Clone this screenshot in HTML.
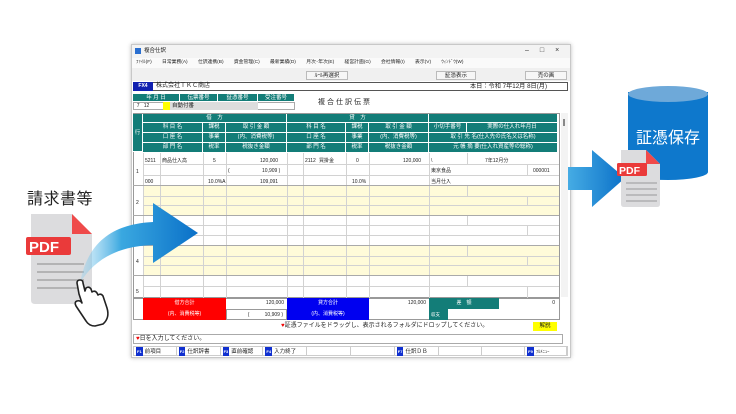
<!DOCTYPE html>
<html><head><meta charset="utf-8"><style>
*{margin:0;padding:0;box-sizing:border-box}
body{width:736px;height:414px;background:#fff;position:relative;overflow:hidden;font-family:"Liberation Sans","Noto Sans CJK JP",sans-serif;font-size:6px;color:#222}
.a{position:absolute}
.t{background:#137d78;color:#fff;text-align:center;border-right:1px solid #fff;border-bottom:1px solid #fff;line-height:8px;font-size:5.5px;white-space:nowrap;overflow:hidden}
.c{border-right:1px solid #c8c8c8;border-bottom:1px solid #d0d0d0;font-size:5px;line-height:8px;white-space:nowrap;overflow:hidden;padding:0 2px}
.y{background:#fffbd9}
.btn{border:1px solid #bbb;background:#f6f6f6;height:9px;font-size:5.5px;line-height:8px;text-align:center}
.fk{font-size:5.5px;line-height:9px;border-right:1px solid #ccc;padding-left:2px}
.fk b{display:inline-block;background:#1030d0;color:#fff;font-size:4px;padding:0 1px;margin-right:2px}
</style></head><body>

<!-- window -->
<div class="a" style="left:131px;top:44px;width:440px;height:314px;background:#fff;border:1px solid #c8c8c8;box-shadow:0 0 4px rgba(0,0,0,.25)"></div>
<div class="a" style="left:132px;top:45px;width:438px;height:13px;background:#f3f3f3"></div>
<div class="a" style="left:135px;top:48px;width:6px;height:6px;background:#2a6fd0"></div>
<div class="a" style="left:144px;top:47px;font-size:5.5px;line-height:8px">複合仕訳</div>
<div class="a" style="left:525px;top:46px;font-size:7px;line-height:9px;color:#333;letter-spacing:11px">–□×</div>
<div class="a" style="left:132px;top:58px;width:438px;height:10px;background:#fafafa;font-size:4.8px;line-height:10px;word-spacing:9px;padding-left:4px;white-space:nowrap">ﾌｧｲﾙ(F) 日常業務(A) 仕訳連携(B) 資金管理(C) 最新業績(D) 月次･年次(E) 経営計画(G) 会社情報(I) 表示(V) ｳｨﾝﾄﾞｳ(W)</div>
<div class="a" style="left:132px;top:68px;width:438px;height:13px;background:#f0f0f0"></div>
<div class="a btn" style="left:306px;top:71px;width:42px">ﾙｰﾙ再選択</div>
<div class="a btn" style="left:436px;top:71px;width:40px">証憑表示</div>
<div class="a btn" style="left:525px;top:71px;width:42px">売の画</div>
<div class="a" style="left:133px;top:82px;width:435px;height:9px;border:1px solid #555"></div>
<div class="a" style="left:133px;top:82px;width:20px;height:9px;background:#1020b0;color:#fff;font-size:5px;font-weight:bold;line-height:9px;text-align:center">FX4</div>
<div class="a" style="left:156px;top:82px;font-size:6px;line-height:9px">株式会社ＴＫＣ商店</div>
<div class="a" style="left:470px;top:82px;font-size:6.2px;line-height:9px">本日：令和 7年12月 8日(月)</div>
<!-- date row -->
<div class="a t" style="left:133px;top:94px;width:47px;height:8px">年 月 日</div>
<div class="a t" style="left:180px;top:94px;width:38px;height:8px">伝票番号</div>
<div class="a t" style="left:218px;top:94px;width:40px;height:8px">証憑番号</div>
<div class="a t" style="left:258px;top:94px;width:37px;height:8px">受注番号</div>
<div class="a" style="left:133px;top:102px;width:162px;height:8px;border:1px solid #aaa;font-size:5px;line-height:7px">&nbsp;&nbsp;7&nbsp;&nbsp;&nbsp;12</div>
<div class="a" style="left:163px;top:102px;width:7px;height:8px;background:#ff0"></div>
<div class="a" style="left:170px;top:102px;width:88px;height:8px;background:#ddd;font-size:5.5px;line-height:8px;padding-left:2px">自動付番</div>
<div class="a" style="left:318px;top:97px;font-size:7px;letter-spacing:2px">複合仕訳伝票</div>

<!-- table header -->
<div class="a" style="left:133px;top:113px;width:427px;height:185px;border:1px solid #999"></div>
<div class="a t" style="left:133px;top:114px;width:10px;height:38px;line-height:38px">行</div>
<div class="a t" style="left:143px;top:114px;width:144px;height:9px">借　方</div>
<div class="a t" style="left:287px;top:114px;width:142px;height:9px">貸　方</div>
<div class="a t" style="left:429px;top:114px;width:129px;height:9px"></div>
<div class="a t" style="left:143px;top:123px;width:60px;height:10px;line-height:9px">科 目 名</div>
<div class="a t" style="left:203px;top:123px;width:23px;height:10px;line-height:9px">課税</div>
<div class="a t" style="left:226px;top:123px;width:61px;height:10px;line-height:9px">取 引 金 額</div>
<div class="a t" style="left:287px;top:123px;width:59px;height:10px;line-height:9px">科 目 名</div>
<div class="a t" style="left:346px;top:123px;width:23px;height:10px;line-height:9px">課税</div>
<div class="a t" style="left:369px;top:123px;width:60px;height:10px;line-height:9px">取 引 金 額</div>
<div class="a t" style="left:429px;top:123px;width:38px;height:10px;line-height:9px">小切手番号</div>
<div class="a t" style="left:467px;top:123px;width:91px;height:10px;line-height:9px">実際の仕入れ年月日</div>
<div class="a t" style="left:143px;top:133px;width:60px;height:10px;line-height:9px">口 座 名</div>
<div class="a t" style="left:203px;top:133px;width:23px;height:10px;line-height:9px">事業</div>
<div class="a t" style="left:226px;top:133px;width:61px;height:10px;line-height:9px">(内、消費税等)</div>
<div class="a t" style="left:287px;top:133px;width:59px;height:10px;line-height:9px">口 座 名</div>
<div class="a t" style="left:346px;top:133px;width:23px;height:10px;line-height:9px">事業</div>
<div class="a t" style="left:369px;top:133px;width:60px;height:10px;line-height:9px">(内、消費税等)</div>
<div class="a t" style="left:429px;top:133px;width:129px;height:10px;line-height:9px">取 引 先 名(仕入先の氏名又は名称)</div>
<div class="a t" style="left:143px;top:143px;width:60px;height:10px;line-height:9px">部 門 名</div>
<div class="a t" style="left:203px;top:143px;width:23px;height:10px;line-height:9px">税率</div>
<div class="a t" style="left:226px;top:143px;width:61px;height:10px;line-height:9px">税抜き金額</div>
<div class="a t" style="left:287px;top:143px;width:59px;height:10px;line-height:9px">部 門 名</div>
<div class="a t" style="left:346px;top:143px;width:23px;height:10px;line-height:9px">税率</div>
<div class="a t" style="left:369px;top:143px;width:60px;height:10px;line-height:9px">税抜き金額</div>
<div class="a t" style="left:429px;top:143px;width:129px;height:10px;line-height:9px">元 帳 摘 要(仕入れ資産等の総称)</div>

<!-- data rows (generated with SVG grid) -->
<svg class="a" style="left:133px;top:153px" width="426" height="145">
<rect x="10" y="33" width="416" height="29" fill="#fffbd9"/>
<rect x="10" y="93" width="416" height="29" fill="#fffbd9"/>
<g stroke="#d2d2d2" stroke-width="1">
<line x1="10" x2="426" y1="11.5" y2="11.5"/><line x1="10" x2="426" y1="22.5" y2="22.5"/>
<line x1="10" x2="426" y1="43.5" y2="43.5"/><line x1="10" x2="426" y1="52.5" y2="52.5"/>
<line x1="10" x2="426" y1="72.5" y2="72.5"/><line x1="10" x2="426" y1="82.5" y2="82.5"/>
<line x1="10" x2="426" y1="103.5" y2="103.5"/><line x1="10" x2="426" y1="112.5" y2="112.5"/>
<line x1="10" x2="426" y1="133.5" y2="133.5"/>
<line x1="10.5" x2="10.5" y1="0" y2="145"/><line x1="27.5" x2="27.5" y1="0" y2="145"/>
<line x1="70.5" x2="70.5" y1="0" y2="145"/><line x1="93.5" x2="93.5" y1="0" y2="145"/>
<line x1="154.5" x2="154.5" y1="0" y2="145"/><line x1="170.5" x2="170.5" y1="0" y2="145"/>
<line x1="213.5" x2="213.5" y1="0" y2="145"/><line x1="236.5" x2="236.5" y1="0" y2="145"/>
<line x1="296.5" x2="296.5" y1="0" y2="145"/>
</g>
<g stroke="#aaa" stroke-width="1">
<line x1="0" x2="426" y1="32.5" y2="32.5"/><line x1="0" x2="426" y1="62.5" y2="62.5"/>
<line x1="0" x2="426" y1="92.5" y2="92.5"/><line x1="0" x2="426" y1="122.5" y2="122.5"/>
</g>
<g font-size="5" fill="#222" font-family="Liberation Sans,Noto Sans CJK JP,sans-serif">
<text x="3" y="20">1</text><text x="3" y="51">2</text><text x="3" y="110">4</text><text x="3" y="140">5</text>
<text x="12" y="9">5211</text><text x="29" y="9">商品仕入高</text><text x="80" y="9">5</text><text x="127" y="9">120,000</text>
<text x="172" y="9">2112</text><text x="186" y="9">買掛金</text><text x="223" y="9">0</text><text x="270" y="9">120,000</text>
<text x="298" y="9">\</text><text x="352" y="9">7年12月分</text>
<text x="95" y="19">(</text><text x="129" y="19">10,909 )</text>
<text x="298" y="19">東京食品</text><text x="400" y="19">000001</text>
<text x="12" y="30">000</text><text x="75" y="30">10.0%A</text><text x="127" y="30">109,091</text>
<text x="219" y="30">10.0%</text><text x="298" y="30">当月仕入</text>
</g>
<g stroke="#d2d2d2"><line x1="334.5" x2="334.5" y1="0" y2="11"/><line x1="394.5" x2="394.5" y1="11" y2="22"/>
<line x1="334.5" x2="334.5" y1="33" y2="43"/><line x1="394.5" x2="394.5" y1="43" y2="52"/>
<line x1="334.5" x2="334.5" y1="63" y2="72"/><line x1="394.5" x2="394.5" y1="72" y2="82"/>
<line x1="334.5" x2="334.5" y1="93" y2="103"/><line x1="394.5" x2="394.5" y1="103" y2="112"/>
<line x1="334.5" x2="334.5" y1="123" y2="133"/><line x1="394.5" x2="394.5" y1="133" y2="145"/></g>
</svg>
<!-- scrollbar -->
<div class="a" style="left:561px;top:113px;width:7px;height:184px;background:#f3f3f3"></div>
<div class="a" style="left:563px;top:119px;width:2px;height:7px;background:#888"></div>

<!-- totals -->
<div class="a" style="left:133px;top:298px;width:427px;height:22px;border:1px solid #999;background:#fff"></div>
<div class="a" style="left:143px;top:298px;width:83px;height:11px;background:#f00;color:#fff;font-size:5px;line-height:11px;text-align:center">借方合計</div>
<div class="a" style="left:143px;top:309px;width:83px;height:11px;background:#f00;color:#fff;font-size:5px;line-height:11px;text-align:center">(内、消費税等)</div>
<div class="a" style="left:226px;top:298px;width:61px;height:11px;font-size:5px;line-height:11px;text-align:right;padding-right:3px">120,000</div>
<div class="a" style="left:226px;top:309px;width:61px;height:11px;font-size:5px;line-height:11px;text-align:right;padding-right:3px;border:1px solid #999">(&nbsp;&nbsp;&nbsp;&nbsp;&nbsp;&nbsp;&nbsp;&nbsp;&nbsp;&nbsp;&nbsp;10,909 )</div>
<div class="a" style="left:287px;top:298px;width:82px;height:11px;background:#0000f0;color:#fff;font-size:5px;line-height:11px;text-align:center">貸方合計</div>
<div class="a" style="left:287px;top:309px;width:82px;height:11px;background:#0000f0;color:#fff;font-size:5px;line-height:11px;text-align:center">(内、消費税等)</div>
<div class="a" style="left:369px;top:298px;width:60px;height:11px;font-size:5px;line-height:11px;text-align:right;padding-right:3px">120,000</div>
<div class="a" style="left:429px;top:298px;width:70px;height:11px;background:#137d78;color:#fff;font-size:5px;line-height:11px;text-align:center">差　額</div>
<div class="a" style="left:499px;top:298px;width:59px;height:11px;font-size:5px;line-height:11px;text-align:right;padding-right:3px">0</div>
<div class="a" style="left:429px;top:309px;width:19px;height:11px;background:#137d78;color:#fff;font-size:4.5px;line-height:11px;padding-left:2px">収支</div>
<div class="a" style="left:281px;top:321px;font-size:6px;line-height:11px;white-space:nowrap"><span style="color:#e00">♥</span>証憑ファイルをドラッグし、表示されるフォルダにドロップしてください。</div>
<div class="a" style="left:533px;top:322px;width:24px;height:9px;background:#ff0;font-size:5.5px;line-height:9px;text-align:center">解説</div>
<div class="a" style="left:133px;top:334px;width:430px;height:10px;border:1px solid #aaa;font-size:6px;line-height:9px;padding-left:2px"><span style="color:#e00">♥</span>日を入力してください。</div>
<div class="a" style="left:133px;top:346px;width:435px;height:10px;border:1px solid #ccc;display:flex">
<div class="fk" style="width:43px"><b>F1</b>前項目</div>
<div class="fk" style="width:44px"><b>F2</b>仕訳辞書</div>
<div class="fk" style="width:43px"><b>F3</b>直前確認</div>
<div class="fk" style="width:44px"><b>F4</b>入力終了</div>
<div class="fk" style="width:44px"></div>
<div class="fk" style="width:44px"></div>
<div class="fk" style="width:44px"><b>F7</b>仕訳ＤＢ</div>
<div class="fk" style="width:44px"></div>
<div class="fk" style="width:43px"></div>
<div class="fk" style="width:42px;font-size:4.5px"><b>F9</b>ﾌﾙﾒﾆｭｰ</div>
</div>

<!-- left graphic -->
<div class="a" style="left:27px;top:190px;font-size:16px;line-height:20px;color:#222;letter-spacing:0.5px">請求書等</div>
<svg class="a" style="left:0;top:180px" width="230" height="150">
<defs>
<linearGradient id="g1" x1="0" x2="1" y1="0" y2="0"><stop offset="0" stop-color="#8fd0f0" stop-opacity="0.3"/><stop offset="0.35" stop-color="#3aa8e0"/><stop offset="1" stop-color="#0a70c8"/></linearGradient>
</defs>
<path d="M31 34 H72 L92 54 V120 Q92 124 88 124 H35 Q31 124 31 120 Z" fill="#dcdcde"/>
<path d="M72 34 L92 54 H72 Z" fill="#ef4a4a"/>
<rect x="26" y="57" width="45" height="18" rx="2" fill="#ea3a3a"/>
<text x="29" y="72" font-size="15" font-weight="bold" fill="#fff" font-family="Liberation Sans,sans-serif">PDF</text>
<g stroke="#9a9a9a" stroke-width="1.3"><line x1="37" x2="84" y1="84" y2="84"/><line x1="37" x2="84" y1="92" y2="92"/><line x1="37" x2="84" y1="100" y2="100"/><line x1="37" x2="80" y1="108" y2="108"/></g>
<path d="M80 103 C88 60 115 44 153 42 L153 23 L198 53 L153 83 L153 65 C120 66 95 78 80 103 Z" fill="url(#g1)"/>
<path d="M79 114 L77 103 Q77 100 80 100 Q83 100 83 103 L85 111 L86 108 Q89 106 91 109 L92 112 Q95 110 97 113 L98 115 Q101 113 103 116 L107 128 Q110 138 103 144 L95 146 Q89 146 86 141 L76 126 Q74 122 77 121 Q80 120 82 123 Z" fill="#fff" stroke="#222" stroke-width="1.6" stroke-linejoin="round"/>
</svg>

<!-- right graphic -->
<svg class="a" style="left:565px;top:80px" width="171" height="140">
<defs><linearGradient id="g2" x1="0" x2="1"><stop offset="0" stop-color="#46ace4"/><stop offset="1" stop-color="#0a70c8"/></linearGradient></defs>
<path d="M63 12 V92 A40 8 0 0 0 143 92 V12 Z" fill="#0e78cc"/>
<ellipse cx="103" cy="14" rx="40" ry="8" fill="#6ea9d9"/>
<text x="103" y="63" text-anchor="middle" font-size="16" fill="#fff" font-family="Liberation Sans,Noto Sans CJK JP,sans-serif">証憑保存</text>
<path d="M3 87 H27 V70 L60 98 L27 127 V110 H3 Z" fill="url(#g2)"/>
<path d="M56 70 H81 L95 84 V124 Q95 127 92 127 H59 Q56 127 56 124 Z" fill="#dcdcde"/>
<path d="M81 70 L95 84 H81 Z" fill="#ef4a4a"/>
<rect x="52" y="83" width="30" height="13" rx="1.5" fill="#ea3a3a"/>
<text x="54" y="94" font-size="10.5" font-weight="bold" fill="#fff" font-family="Liberation Sans,sans-serif">PDF</text>
<g stroke="#999" stroke-width="1"><line x1="61" x2="92" y1="103" y2="103"/><line x1="61" x2="92" y1="109" y2="109"/><line x1="61" x2="92" y1="115" y2="115"/><line x1="61" x2="92" y1="121" y2="121"/></g>
</svg>
</body></html>
